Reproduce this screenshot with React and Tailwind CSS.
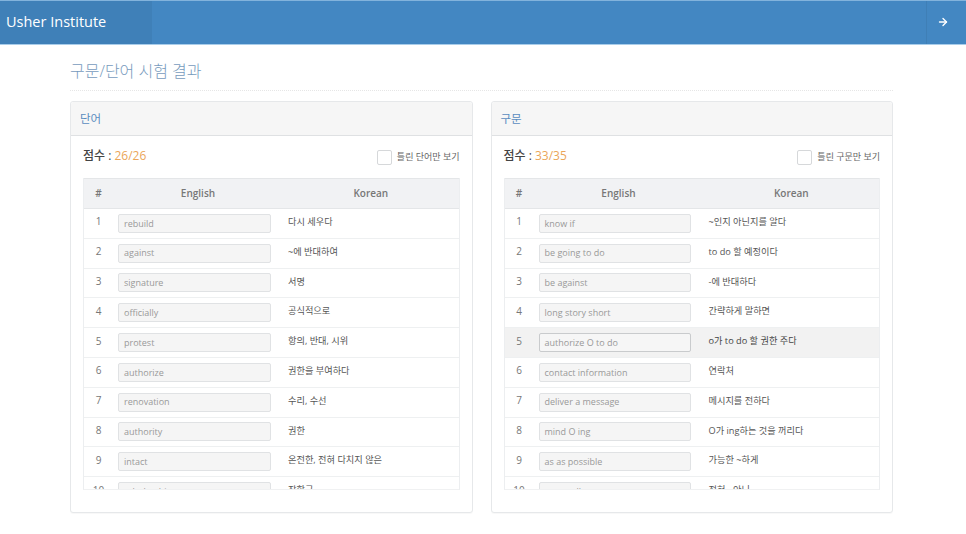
import React from "react";
import { ArrowRight } from "lucide-react";

const font = { fontFamily: '"Open Sans", "Noto Sans CJK KR", sans-serif' };

const words = [
  ["rebuild", "다시 세우다"],
  ["against", "~에 반대하여"],
  ["signature", "서명"],
  ["officially", "공식적으로"],
  ["protest", "항의, 반대, 시위"],
  ["authorize", "권한을 부여하다"],
  ["renovation", "수리, 수선"],
  ["authority", "권한"],
  ["intact", "온전한, 전혀 다치지 않은"],
  ["scholarship", "장학금"],
];
const phrases = [
  ["know if", "~인지 아닌지를 알다"],
  ["be going to do", "to do 할 예정이다"],
  ["be against", "-에 반대하다"],
  ["long story short", "간략하게 말하면"],
  ["authorize O to do", "o가 to do 할 권한 주다"],
  ["contact information", "연락처"],
  ["deliver a message", "메시지를 전하다"],
  ["mind O ing", "O가 ing하는 것을 꺼리다"],
  ["as as possible", "가능한 ~하게"],
  ["not at all", "전혀 ~아닌"],
];

function Panel({ title, score, filter, rows, hovered }) {
  return (
    <section className="w-[402.5px] h-[412px] border border-[#e6e8ea] rounded-[3px] bg-white shadow-[0_1px_1px_rgba(0,0,0,0.03)]">
      <h2 className="h-[34px] px-[9px] flex items-center bg-[#f6f6f6] border-b border-[#dfe1e3] text-[11.5px] font-normal text-[#5a8dc0] rounded-t-[3px]">
        {title}
      </h2>
      <div className="px-[12px]">
        <div className="h-[42px] flex items-center justify-between">
          <p className="text-[12px] text-[#444] pb-[3px]">
            <span className="font-medium">점수</span> : <span className="text-[#eba659]">{score}</span>
          </p>
          <label className="flex items-center gap-[5px] text-[9px] text-[#666]">
            <span className="w-[15px] h-[15px] rounded-[2px] border border-[#d6d8da] bg-white" />
            {filter}
          </label>
        </div>
        <div className="h-[312px] overflow-hidden border-x border-[#eceef0] border-b border-b-[#f0f1f2]">
          <div className="h-[31px] flex items-center bg-[#f1f2f4] border-y border-[#e4e6e8] text-[10px] font-semibold text-[#777]">
            <span className="w-[29px] text-center">#</span>
            <span className="w-[170px] text-center">English</span>
            <span className="flex-1 text-center">Korean</span>
          </div>
          {rows.map(([en, ko], i) => (
            <div
              key={en}
              className={`h-[29.8px] flex items-center border-b border-[#eef0f1] ${i + 1 === hovered ? "bg-[#f2f2f2] text-[#444]" : "text-[#555]"}`}
            >
              <span className="w-[29px] text-center text-[10px] text-[#777] pb-[3px]">{i + 1}</span>
              <span className={`ml-[5px] w-[152.5px] h-[19px] pl-[5px] flex items-center border rounded-[2px] text-[9px] text-[#999] ${i + 1 === hovered ? "bg-[#f6f6f6] border-[#c9cbcd]" : "bg-[#f5f5f5] border-[#e0e2e4]"}`}>
                {en}
              </span>
              <span className="ml-[17.5px] text-[9.2px] pb-[3px]">{ko}</span>
            </div>
          ))}
        </div>
      </div>
    </section>
  );
}

export default function App() {
  return (
    <div style={font} className="w-[966px] h-[534px] overflow-hidden bg-white">
      <header className="h-[45px] flex bg-[#4387c2] border-t border-[#82b3dc] border-b border-b-[#a9cdea] text-white">
        <div className="w-[152px] flex items-center pl-[6px] bg-[#3f80b8] text-[14.5px] pb-[1px]">Usher Institute</div>
        <div className="flex-1" />
        <div className="w-[40px] pb-[1px] pr-[8px] flex items-center justify-center border-l border-[#3f7fb6]">
          <ArrowRight size={12} strokeWidth={2.8} />
        </div>
      </header>
      <main className="pl-[70px] pr-[73px]">
        <h1 className="h-[46px] pt-[14px] border-b border-dotted border-[#e6e6e6] text-[16px] font-light leading-[24px] text-[#779bbd]">
          구문/단어 시험 결과
        </h1>
        <div className="mt-[10px] flex justify-between">
          <Panel title="단어" score="26/26" filter="틀린 단어만 보기" rows={words} />
          <Panel title="구문" score="33/35" filter="틀린 구문만 보기" rows={phrases} hovered={5} />
        </div>
      </main>
    </div>
  );
}
